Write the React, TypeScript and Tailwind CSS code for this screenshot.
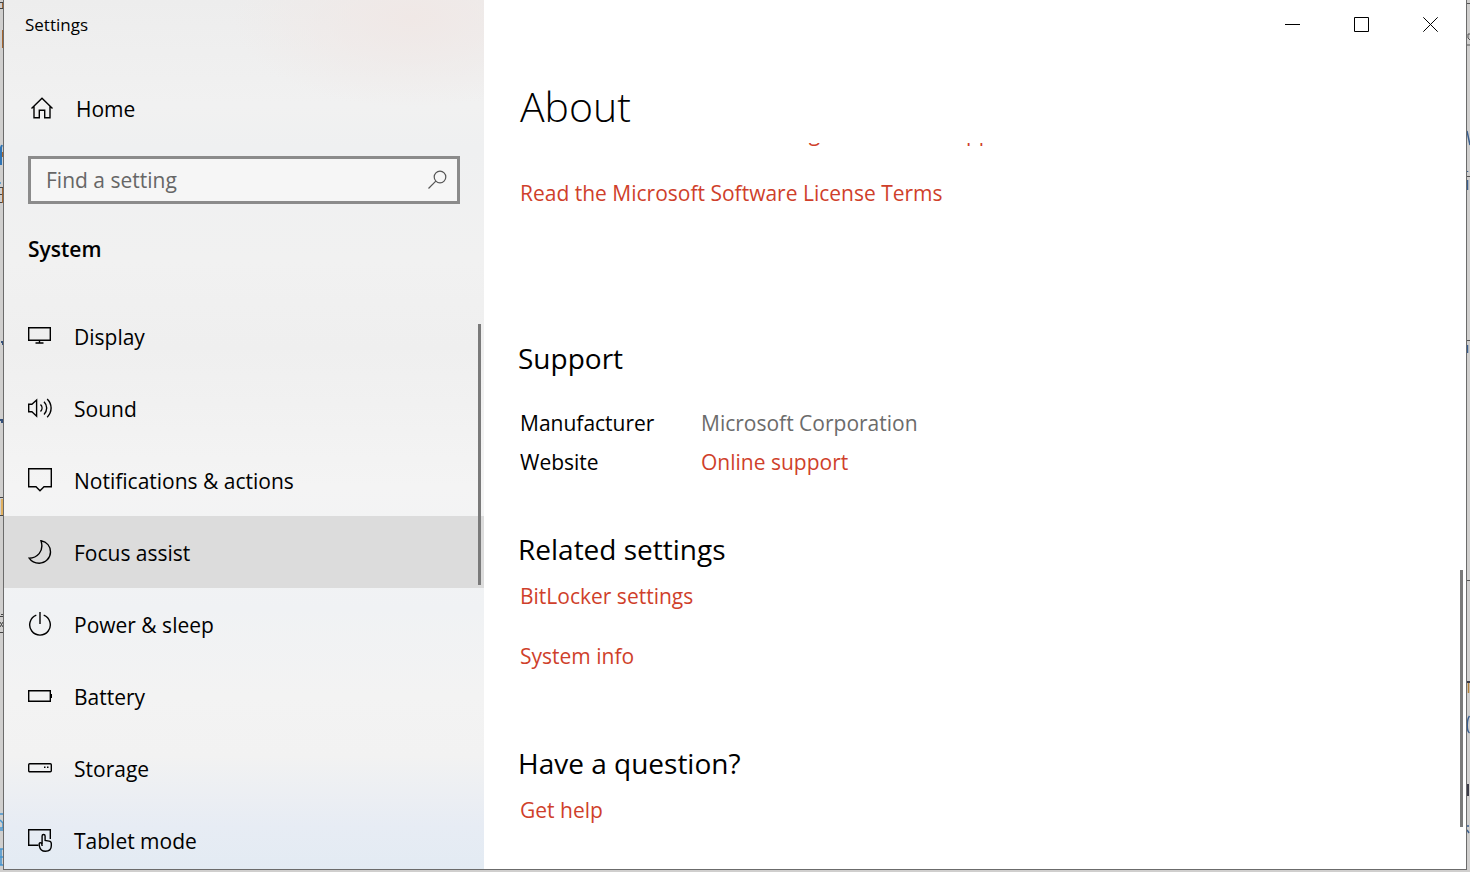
import React from "react";

type IconProps = { children: React.ReactNode };

function Icon({ children }: IconProps) {
  return (
    <svg
      aria-hidden="true"
      width="24"
      height="24"
      viewBox="0 0 24 24"
      fill="none"
      stroke="currentColor"
      strokeWidth="1.4"
      className="shrink-0"
    >
      {children}
    </svg>
  );
}

const navItems = [
  {
    label: "Display",
    icon: (
      <Icon>
        <path d="M.7 3.7h21.6v12.6H.7zM11.5 16.3v2.4M7.5 19h8" />
      </Icon>
    ),
  },
  {
    label: "Sound",
    icon: (
      <Icon>
        <path d="M.7 8.2h3.2L8.6 4v16.2l-4.7-4.4H.7z" />
        <path d="M12.5 8.6c2 2 2 5 0 7M16 5.8c3.6 3.6 3.6 9 0 12.6M19.2 3c5.2 5.2 5.2 13 0 18.2" />
      </Icon>
    ),
  },
  {
    label: "Notifications & actions",
    icon: (
      <Icon>
        <path d="M.7.7h22.6v18H16l-4 4-4-4H.7z" />
      </Icon>
    ),
  },
  {
    label: "Focus assist",
    active: true,
    icon: (
      <Icon>
        <path d="M13 .8c5.8 1.2 9.5 5.6 9.5 11.2 0 6-5 11.200-11.300 11.200-4.400 0-8-1.900-10-5C8.500 18 16.500 12 13 .8z" />
      </Icon>
    ),
  },
  {
    label: "Power & sleep",
    icon: (
      <Icon>
        <path d="M8.300 3.200a10.300 10.300 0 1 0 7.400 0M12 0v12" />
      </Icon>
    ),
  },
  {
    label: "Battery",
    icon: (
      <Icon>
        <path d="M.7 6.700h21.600v10.600H.7zM23.300 10v4" />
      </Icon>
    ),
  },
  {
    label: "Storage",
    icon: (
      <Icon>
        <rect x=".7" y="7.700" width="22.600" height="8" rx="1" />
        <path d="M16 11.300h1.500M19 11.300h1.500" />
      </Icon>
    ),
  },
  {
    label: "Tablet mode",
    icon: (
      <Icon>
        <path d="M10.500 17.300H.7V1.700h21.600v9.300" />
        <path d="M14.100 16V8c0-2 3-2 3 0v4.500l4 .6c1.400.2 2.200 1 2.200 2.400v2.300c0 3.300-2.300 5.500-5.900 5.500-3.200 0-5.400-2-6-5.200-.3-1.800-.4-3.500.7-3.500 1.200 0 2 1.900 2 3.400" />
      </Icon>
    ),
  },
];

function TextLink({ children }: { children: React.ReactNode }) {
  return (
    <a href="#" className="block w-fit whitespace-nowrap text-[#cf3f2b] hover:text-gray-500">
      {children}
    </a>
  );
}

function SectionHeading({ children }: { children: React.ReactNode }) {
  return <h2 className="-ml-0.5 text-[28px] leading-10">{children}</h2>;
}

function Sidebar() {
  return (
    <aside className="relative flex w-[480px] shrink-0 flex-col bg-[linear-gradient(180deg,#ededed_0%,#f1f1f1_12%,#eff0f1_17%,#f1f1f1_30%,#efefef_40%,#f4f4f4_56%,#f0f2f4_70%,#f3f3f3_80%,#f2f2f2_87%,#e7ecf4_95%,#e3ebf3_100%)]">
      <div className="pointer-events-none absolute inset-0 bg-[radial-gradient(ellipse_180px_90px_at_85%_2%,#f0e8e6_0%,transparent_100%)]" />
      <div className="relative flex h-12 items-center px-[21px] pt-px text-[17px]">Settings</div>
      <a href="#" className="relative mt-9 flex h-12 items-center gap-[22px] px-[26px]">
        <Icon>
          <path d="M1.500 12.500 12 2.200l10.500 10.300M4 10.500v11.300h5.300v-7.500h5.400v7.500H20V10.500" />
        </Icon>
        <span className="pt-[3px]">Home</span>
      </a>
      <label className="relative mx-6 mt-6 flex h-12 shrink-0 items-center border-[3px] border-[#8b8b8b] bg-[#f6f6f6] pr-[10px] pl-[15px] text-[#666]">
        <span className="sr-only">Find a setting</span>
        <input
          type="text"
          placeholder="Find a setting"
          className="min-w-0 flex-1 bg-transparent pt-px outline-none placeholder:text-[#666]"
        />
        <svg aria-hidden="true" width="20" height="20" viewBox="0 0 20 20" fill="none" stroke="#555" strokeWidth="1.200">
          <circle cx="13" cy="7" r="5.800" />
          <path d="M8.800 11.200 1.500 18.500" />
        </svg>
      </label>
      <h2 className="relative mt-[25px] px-6 leading-10 font-semibold">System</h2>
      <nav className="relative mt-[31px] min-h-0 flex-1 overflow-hidden">
        {navItems.map((item) => (
          <a
            key={item.label}
            href="#"
            className={
              item.active
                ? "flex h-[72px] items-center gap-[22px] bg-[#dcdcdc] px-6"
                : "flex h-[72px] items-center gap-[22px] px-6"
            }
          >
            {item.icon}
            <span className="pt-[3px]">{item.label}</span>
          </a>
        ))}
        <div className="absolute top-6 right-[3px] h-[261px] w-[3px] bg-[#7a7a7a]" />
      </nav>
    </aside>
  );
}

function WindowControls() {
  const button = "flex h-12 w-[69px] items-center justify-center hover:bg-gray-200";
  return (
    <div className="flex h-12 shrink-0 justify-end pr-px">
      <button type="button" aria-label="Minimize" className={button}>
        <svg width="15" height="15" viewBox="0 0 15 15" stroke="#000">
          <path d="M0 7.500h15" />
        </svg>
      </button>
      <button type="button" aria-label="Maximize" className={button}>
        <svg width="15" height="15" viewBox="0 0 15 15" stroke="#000" fill="none">
          <path d="M.5.5h14v14H.5z" />
        </svg>
      </button>
      <button type="button" aria-label="Close" className={button}>
        <svg width="15" height="15" viewBox="0 0 15 15" stroke="#000">
          <path d="M.3.3l14.400 14.400M14.700.3.3 14.700" />
        </svg>
      </button>
    </div>
  );
}

function Content() {
  return (
    <main className="relative flex min-w-0 flex-1 flex-col bg-white">
      <WindowControls />
      <h1 className="mt-[29px] px-9 text-[41px] leading-[58px] font-light">About</h1>
      <div className="mt-2 flex min-h-0 flex-1 flex-col overflow-hidden px-9 leading-[30px]">
        <div className="-mt-[25px] flex shrink-0 flex-col gap-[30px]">
          <TextLink>Read the Microsoft Services Agreement that applies to our services</TextLink>
          <TextLink>Read the Microsoft Software License Terms</TextLink>
        </div>
        <section className="mt-[130px]">
          <SectionHeading>Support</SectionHeading>
          <dl className="mt-[30px] grid grid-cols-[181px_1fr] gap-y-[9px]">
            <dt>Manufacturer</dt>
            <dd className="text-[#6b6b6b]">Microsoft Corporation</dd>
            <dt>Website</dt>
            <dd>
              <TextLink>Online support</TextLink>
            </dd>
          </dl>
        </section>
        <section className="mt-[52px]">
          <SectionHeading>Related settings</SectionHeading>
          <div className="mt-3 flex flex-col gap-[30px]">
            <TextLink>BitLocker settings</TextLink>
            <TextLink>System info</TextLink>
          </div>
        </section>
        <section className="mt-[72px]">
          <SectionHeading>Have a question?</SectionHeading>
          <div className="mt-3">
            <TextLink>Get help</TextLink>
          </div>
        </section>
      </div>
      <div className="absolute right-[3px] bottom-[42px] h-[257px] w-[3px] bg-[#7a7a7a]" />
    </main>
  );
}

function DesktopEdge({ children }: { children: React.ReactNode }) {
  return (
    <div className="w-[3px] shrink-0 overflow-hidden">
      <svg aria-hidden="true" width="3" height="872" viewBox="0 0 3 872" fill="none">
        {children}
      </svg>
    </div>
  );
}

export default function App() {
  return (
    <div className="flex h-screen overflow-hidden bg-[#d0cfce] pb-[2px] font-['Open_Sans','Noto_Sans',sans-serif] text-[21px] text-black">
      <DesktopEdge>
        <path stroke="#444" d="M0 2.500h3M0 8.500h3M0 187.500h3M0 194.500h3M0 202.500h3M0 497.500h3M0 515.500h3M1 614.500h2M0 616.500h3M0 632.500h3M0 622l3 5M0 627l3-5" />
        <path stroke="#a5662f" d="M2.500 3v5M2.500 30v18M2.500 152v5M2.500 188v15" />
        <path stroke="#e0b060" strokeWidth="2" d="M2 499v16" />
        <path stroke="#2f74b5" strokeWidth="2" d="M0 150l2-5M1 148v17" />
        <path stroke="#34507a" strokeWidth="2" d="M1 342h2v3M0 420h2v3" />
        <path stroke="#4595cf" strokeWidth="1.500" d="M0 183h1M0 814h3M0 820l3 3v5H0M0 830h3M0 849h3M1 849v16M0 857h3M0 865h3" />
      </DesktopEdge>
      <div className="flex min-w-0 flex-1 border-x border-b border-[#6b6b6b]">
        <Sidebar />
        <Content />
      </div>
      <DesktopEdge>
        <path stroke="#555" d="M0 3.500h3M3 34H1v4l2 2M0 45h3M0 176.500h3M0 340.500h3M0 580.500h3" />
        <path stroke="#3a5f8f" strokeWidth="1.500" d="M0 131l3 14M.5 171v1M.5 180v10M.5 345v8M2.500 716c-3 4-3 15 0 17M1 825v2M0 830l2 3" />
        <path stroke="#b3823c" strokeWidth="1.500" d="M1.500 683v10" />
        <path stroke="#3c3c48" strokeWidth="2" d="M1 784v12M0 682h3" />
      </DesktopEdge>
    </div>
  );
}
